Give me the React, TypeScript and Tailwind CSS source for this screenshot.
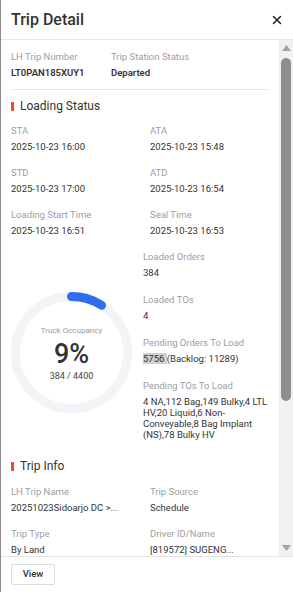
import { X } from 'lucide-react';

function Field({ label, value }: { label: string; value: string }) {
  return (
    <div className="min-w-0">
      <div className="text-[9.5px] leading-[12px] text-[#9a9ea6]">{label}</div>
      <div className="mt-[4px] whitespace-nowrap text-[9.5px] leading-[12px] text-[#333]">{value}</div>
    </div>
  );
}

function SectionTitle({ children }: { children: string }) {
  return (
    <div className="flex items-center gap-[6px]">
      <span className="h-[9px] w-[3px] bg-[#ee4d2d]" />
      <span className="text-[12px] leading-[16px] text-[#333]">{children}</span>
    </div>
  );
}

function Gauge({ percent }: { percent: number }) {
  const r = 56;
  const c = 2 * Math.PI * r;
  return (
    <div className="relative h-[121px] w-[121px] shrink-0">
      <svg width="121" height="121" viewBox="0 0 121 121">
        <circle cx="60.5" cy="60.5" r={r} fill="none" stroke="#f2f4f8" strokeWidth="9" />
        <circle
          cx="60.5"
          cy="60.5"
          r={r}
          fill="none"
          stroke="#2f6fef"
          strokeWidth="9"
          strokeLinecap="round"
          strokeDasharray={`${(c * percent) / 100} ${c}`}
          transform="rotate(-90 60.5 60.5)"
        />
      </svg>
      <div className="absolute inset-0 flex flex-col items-center justify-center pt-[2px]">
        <div className="text-[8px] leading-[10px] text-[#999]">Truck Occupancy</div>
        <div className="mt-[3px] text-[27px] font-medium leading-[30px] text-[#333]">9%</div>
        <div className="mt-[2px] text-[9px] leading-[11px] text-[#444]">384 / 4400</div>
      </div>
    </div>
  );
}

function Scrollbar() {
  return (
    <div className="flex w-[14px] shrink-0 flex-col items-center bg-[#f1f1f1]">
      <div className="flex h-[16px] items-center justify-center">
        <svg width="9" height="6" viewBox="0 0 9 6"><path d="M4.5 0 L9 6 H0 Z" fill="#a3a3a3" /></svg>
      </div>
      <div className="mt-[2px] h-[343px] w-[10px] rounded-[5px] bg-[#8f8f8f]" />
      <div className="flex-1" />
      <div className="flex h-[16px] items-center justify-center">
        <svg width="9" height="6" viewBox="0 0 9 6"><path d="M0 0 H9 L4.5 6 Z" fill="#a3a3a3" /></svg>
      </div>
    </div>
  );
}

export default function App() {
  return (
    <div
      className="flex h-[592px] w-[293px] flex-col overflow-hidden border-l border-[#8a8a8a] bg-white"
      style={{ fontFamily: 'Roboto, "Liberation Sans", sans-serif' }}
    >
      {/* Header */}
      <div className="flex h-[40px] shrink-0 items-center justify-between border-b border-[#e8e8e8] pl-[10px] pr-[9px]">
        <h1 className="text-[16px] font-medium leading-[20px] text-[#333]">Trip Detail</h1>
        <X className="h-[14px] w-[14px] text-[#222]" strokeWidth={2.5} />
      </div>

      {/* Body */}
      <div className="flex min-h-0 flex-1">
        <div className="min-w-0 flex-1 overflow-hidden pl-[10px] pr-[11px]">
          <div className="flex border-b border-[#e8e8e8] pb-[10px] pt-[11px]">
            <div className="w-[100px]">
              <div className="text-[9.5px] leading-[12px] text-[#9a9ea6]">LH Trip Number</div>
              <div className="mt-[4px] text-[9.5px] font-semibold leading-[12px] text-[#333]">LT0PAN185XUY1</div>
            </div>
            <div>
              <div className="text-[9.5px] leading-[12px] text-[#9a9ea6]">Trip Station Status</div>
              <div className="mt-[4px] text-[9.5px] font-semibold leading-[12px] text-[#333]">Departed</div>
            </div>
          </div>

          <div className="pt-[8px]">
            <SectionTitle>Loading Status</SectionTitle>
            <div className="mt-[11px] grid grid-cols-[139px_1fr] gap-y-[14px]">
              <Field label="STA" value="2025-10-23 16:00" />
              <Field label="ATA" value="2025-10-23 15:48" />
              <Field label="STD" value="2025-10-23 17:00" />
              <Field label="ATD" value="2025-10-23 16:54" />
              <Field label="Loading Start Time" value="2025-10-23 16:51" />
              <Field label="Seal Time" value="2025-10-23 16:53" />
            </div>

            <div className="mt-[14px] flex items-start">
              <div className="w-[132px] shrink-0 pt-[41px]">
                <Gauge percent={9} />
              </div>
              <div className="flex min-w-0 flex-1 flex-col gap-[15px]">
                <Field label="Loaded Orders" value="384" />
                <Field label="Loaded TOs" value="4" />
                <div>
                  <div className="text-[9.5px] leading-[12px] text-[#9a9ea6]">Pending Orders To Load</div>
                  <div className="mt-[4px] text-[9.5px] leading-[12px] text-[#333]">
                    <span className="bg-[#d0d0d0]">5756 </span>(Backlog: 11289)
                  </div>
                </div>
                <div>
                  <div className="text-[9.5px] leading-[12px] text-[#9a9ea6]">Pending TOs To Load</div>
                  <div className="mt-[4px] text-[9.5px] leading-[11px] text-[#333]">
                    4 NA,112 Bag,149 Bulky,4 LTL HV,20 Liquid,6 Non-Conveyable,8 Bag Implant (NS),78 Bulky HV
                  </div>
                </div>
              </div>
            </div>
          </div>

          <div className="pt-[18px]">
            <SectionTitle>Trip Info</SectionTitle>
            <div className="mt-[12px] grid grid-cols-[139px_1fr] gap-y-[14px]">
              <Field label="LH Trip Name" value="20251023Sidoarjo DC >..." />
              <Field label="Trip Source" value="Schedule" />
              <Field label="Trip Type" value="By Land" />
              <Field label="Driver ID/Name" value="[819572] SUGENG..." />
            </div>
          </div>
        </div>
        <Scrollbar />
      </div>

      {/* Footer */}
      <div className="flex h-[36px] shrink-0 items-center border-t border-[#e3e3e3] pl-[10px]">
        <button className="h-[21px] w-[44px] rounded-[2px] border border-[#dcdcdc] text-[9.5px] font-medium text-[#333]">
          View
        </button>
      </div>
    </div>
  );
}
